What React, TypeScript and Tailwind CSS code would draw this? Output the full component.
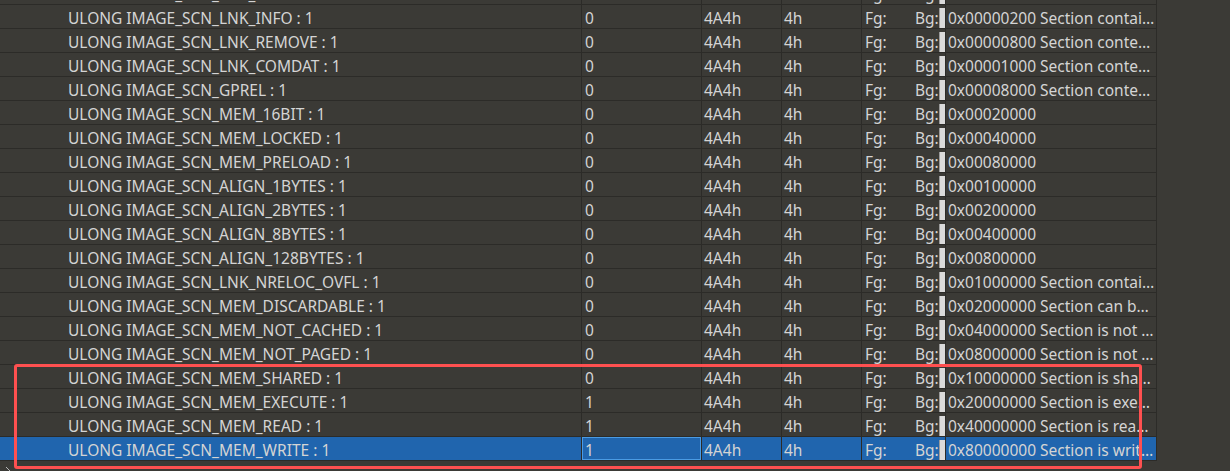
import React from 'react'

type Row = { name: string; value: string; comment: string }

const rows: Row[] = [
  { name: 'ULONG IMAGE_SCN_LNK_OTHER : 1', value: '0', comment: '0x00000100 Reserved.' },
  { name: 'ULONG IMAGE_SCN_LNK_INFO : 1', value: '0', comment: '0x00000200 Section contains comments or some other type of information.' },
  { name: 'ULONG IMAGE_SCN_LNK_REMOVE : 1', value: '0', comment: '0x00000800 Section contents will not become part of image.' },
  { name: 'ULONG IMAGE_SCN_LNK_COMDAT : 1', value: '0', comment: '0x00001000 Section contents comdat.' },
  { name: 'ULONG IMAGE_SCN_GPREL : 1', value: '0', comment: '0x00008000 Section content can be accessed relative to GP' },
  { name: 'ULONG IMAGE_SCN_MEM_16BIT : 1', value: '0', comment: '0x00020000' },
  { name: 'ULONG IMAGE_SCN_MEM_LOCKED : 1', value: '0', comment: '0x00040000' },
  { name: 'ULONG IMAGE_SCN_MEM_PRELOAD : 1', value: '0', comment: '0x00080000' },
  { name: 'ULONG IMAGE_SCN_ALIGN_1BYTES : 1', value: '0', comment: '0x00100000' },
  { name: 'ULONG IMAGE_SCN_ALIGN_2BYTES : 1', value: '0', comment: '0x00200000' },
  { name: 'ULONG IMAGE_SCN_ALIGN_8BYTES : 1', value: '0', comment: '0x00400000' },
  { name: 'ULONG IMAGE_SCN_ALIGN_128BYTES : 1', value: '0', comment: '0x00800000' },
  { name: 'ULONG IMAGE_SCN_LNK_NRELOC_OVFL : 1', value: '0', comment: '0x01000000 Section contains extended relocations.' },
  { name: 'ULONG IMAGE_SCN_MEM_DISCARDABLE : 1', value: '0', comment: '0x02000000 Section can be discarded.' },
  { name: 'ULONG IMAGE_SCN_MEM_NOT_CACHED : 1', value: '0', comment: '0x04000000 Section is not cachable.' },
  { name: 'ULONG IMAGE_SCN_MEM_NOT_PAGED : 1', value: '0', comment: '0x08000000 Section is not pageable.' },
  { name: 'ULONG IMAGE_SCN_MEM_SHARED : 1', value: '0', comment: '0x10000000 Section is shareable.' },
  { name: 'ULONG IMAGE_SCN_MEM_EXECUTE : 1', value: '1', comment: '0x20000000 Section is executable.' },
  { name: 'ULONG IMAGE_SCN_MEM_READ : 1', value: '1', comment: '0x40000000 Section is readable.' },
  { name: 'ULONG IMAGE_SCN_MEM_WRITE : 1', value: '1', comment: '0x80000000 Section is writeable.' },
]

function TemplateRow({ row, selected }: { row: Row; selected: boolean }) {
  const cell = 'shrink-0 border-r border-[#2c2b28] truncate pt-[3px]'
  return (
    <div className={`flex h-[24px] w-[1157px] border-b border-[#2c2b28] leading-[20px] ${selected ? 'bg-[#2065ae]' : ''}`}>
      <div className={`${cell} w-[582px] pl-[68px]`}>{row.name}</div>
      <div className={`${cell} w-[120px] pl-[3px] ${selected ? 'shadow-[inset_0_0_0_1px_#4a9be4]' : ''}`}>{row.value}</div>
      <div className={`${cell} w-[80px] pl-[2px]`}>4A4h</div>
      <div className={`${cell} w-[80px] pl-[2px]`}>4h</div>
      <div className={`${cell} w-[84px] pl-[3px] flex`}>
        <span className="w-[50px]">Fg:</span>
        <span>Bg:</span>
        <span className="ml-auto w-[6px] h-[20px] bg-[#dadada] border-l border-[#9a9a9a]" />
      </div>
      <div className={`${cell} w-[211px] pl-[2px]`}>{row.comment}</div>
    </div>
  )
}

export default function App() {
  return (
    <div className="relative w-[1230px] h-[471px] overflow-hidden bg-[#3b3a36] text-[#d4d4d4] text-[15.5px]"
      style={{ fontFamily: '"Noto Sans", "Open Sans", sans-serif' }}>
      <div className="mt-[-19px]">
        {rows.map((r, i) => (
          <TemplateRow key={r.name} row={r} selected={i === rows.length - 1} />
        ))}
        <div className="h-[24px] w-[1157px] border-b border-[#2c2b28] pl-[4px] pt-[5px]">
          <svg width="10" height="10" viewBox="0 0 10 10" className="text-[#b8b8b8]">
            <path d="M2 1 L6 5 L2 9" fill="none" stroke="currentColor" strokeWidth="1" />
          </svg>
        </div>
      </div>

      {/* red annotation box */}
      <div className="absolute left-[14px] top-[364px] w-[1128px] h-[105px] border-[3px] border-[#ff5050] rounded-[3px]" />
    </div>
  )
}
